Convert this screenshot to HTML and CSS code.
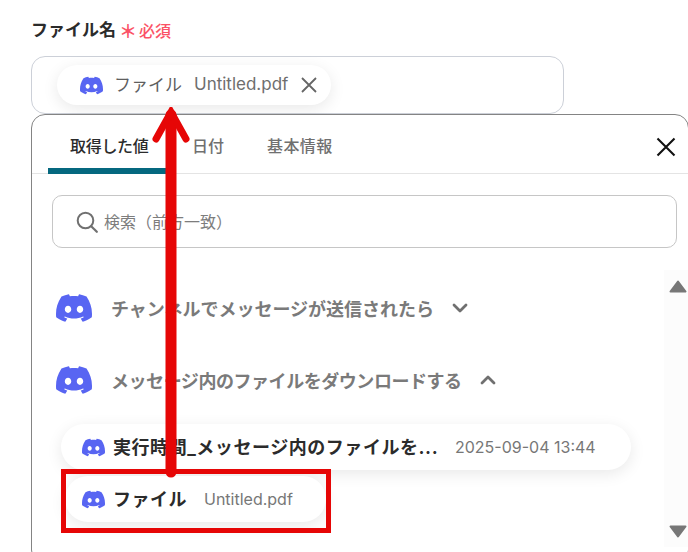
FILE: index.html
```html
<!DOCTYPE html>
<html lang="ja">
<head>
<meta charset="utf-8">
<title>ファイル名</title>
<link rel="stylesheet" href="styles.css">
</head>
<body>
<svg class="defs" width="0" height="0" aria-hidden="true">
  <symbol id="discord" viewBox="0 0 24 24"><path fill="#5865f2" d="M20.317 4.3698a19.7913 19.7913 0 00-4.8851-1.5152.0741.0741 0 00-.0785.0371c-.211.3753-.4447.8648-.6083 1.2495-1.8447-.2762-3.68-.2762-5.4868 0-.1636-.3933-.4058-.8742-.6177-1.2495a.077.077 0 00-.0785-.037 19.7363 19.7363 0 00-4.8852 1.515.0699.0699 0 00-.0321.0277C.5334 9.0458-.319 13.5799.0992 18.0578a.0824.0824 0 00.0312.0561c2.0528 1.5076 4.0413 2.4228 5.9929 3.0294a.0777.0777 0 00.0842-.0276c.4616-.6304.8731-1.2952 1.226-1.9942a.076.076 0 00-.0416-.1057c-.6528-.2476-1.2743-.5495-1.8722-.8923a.077.077 0 01-.0076-.1277c.1258-.0943.2517-.1923.3718-.2914a.0743.0743 0 01.0776-.0105c3.9278 1.7933 8.18 1.7933 12.0614 0a.0739.0739 0 01.0785.0095c.1202.099.246.1981.3728.2924a.077.077 0 01-.0066.1276 12.2986 12.2986 0 01-1.873.8914.0766.0766 0 00-.0407.1067c.3604.698.7719 1.3628 1.225 1.9932a.076.076 0 00.0842.0286c1.961-.6067 3.9495-1.5219 6.0023-3.0294a.077.077 0 00.0313-.0552c.5004-5.177-.8382-9.6739-3.5485-13.6604a.061.061 0 00-.0312-.0286zM8.02 15.3312c-1.1825 0-2.1569-1.0857-2.1569-2.419 0-1.3332.9555-2.4189 2.157-2.4189 1.2108 0 2.1757 1.0952 2.1568 2.419 0 1.3332-.9555 2.4189-2.1569 2.4189zm7.9748 0c-1.1825 0-2.1569-1.0857-2.1569-2.419 0-1.3332.9554-2.4189 2.1569-2.4189 1.2108 0 2.1757 1.0952 2.1568 2.419 0 1.3332-.946 2.4189-2.1568 2.4189Z"/></symbol>
</svg>

<main class="page">
  <div class="label-row">
    <span class="label">ファイル名</span>
    <span class="required"><span class="star">＊</span>必須</span>
  </div>

  <div class="field">
    <div class="chip chip-top">
      <svg class="icon-sm"><use href="#discord"/></svg>
      <span class="chip-name">ファイル</span>
      <span class="chip-value">Untitled.pdf</span>
      <svg class="chip-x" viewBox="0 0 16 16"><path d="M1 1l14 14M15 1L1 15" fill="none" stroke="#666" stroke-width="1.8"/></svg>
    </div>
  </div>

  <section class="panel">
    <header class="tabs">
      <div class="tab tab-active">取得した値</div>
      <div class="tab">日付</div>
      <div class="tab tab-wide">基本情報</div>
      <svg class="close" viewBox="0 0 20 20"><path d="M1.5 1.5l17 17M18.5 1.5l-17 17" fill="none" stroke="#111" stroke-width="2.1"/></svg>
    </header>

    <div class="search">
      <svg class="search-icon" viewBox="0 0 22 22"><circle cx="9.5" cy="9.5" r="7.8" fill="none" stroke="#707070" stroke-width="2"/><path d="M15.2 15.2l5.6 5.6" stroke="#707070" stroke-width="2.2" fill="none" stroke-linecap="round"/></svg>
      <span class="search-text">検索（前方一致）</span>
    </div>

    <div class="tree">
      <div class="tree-list">
        <div class="group">
          <svg class="icon-lg"><use href="#discord"/></svg>
          <span class="group-name">チャンネルでメッセージが送信されたら</span>
          <svg class="chev" viewBox="0 0 16 10"><path d="M2 2l6 6 6-6" fill="none" stroke="#707070" stroke-width="2.8" stroke-linecap="round" stroke-linejoin="round"/></svg>
        </div>
        <div class="group">
          <svg class="icon-lg"><use href="#discord"/></svg>
          <span class="group-name group-name-tight">メッセージ内のファイルをダウンロードする</span>
          <svg class="chev" viewBox="0 0 16 10"><path d="M2 8l6-6 6 6" fill="none" stroke="#707070" stroke-width="2.8" stroke-linecap="round" stroke-linejoin="round"/></svg>
        </div>
        <div class="chip chip-run">
          <svg class="icon-sm"><use href="#discord"/></svg>
          <span class="run-name">実行時間_メッセージ内のファイルを...</span>
          <span class="run-value">2025-09-04 13:44</span>
        </div>
        <div class="chip chip-file">
          <svg class="icon-sm"><use href="#discord"/></svg>
          <span class="file-name">ファイル</span>
          <span class="file-value">Untitled.pdf</span>
        </div>
      </div>
      <div class="scrollbar">
        <svg class="tri" viewBox="0 0 18 13"><path d="M9 1.5L16.5 11.5H1.5Z" fill="#777" stroke="#777" stroke-width="2" stroke-linejoin="round"/></svg>
        <svg class="tri" viewBox="0 0 18 13"><path d="M1.5 1.5H16.5L9 11.5Z" fill="#777" stroke="#777" stroke-width="2" stroke-linejoin="round"/></svg>
      </div>
    </div>
  </section>
</main>

<div class="highlight"></div>
<svg class="arrow" viewBox="0 0 40 380"><path d="M20 8V365" fill="none" stroke="#e60606" stroke-width="11" stroke-linecap="round"/><path d="M5 32L20 5l15 27" fill="none" stroke="#e60606" stroke-width="7" stroke-linecap="round" stroke-linejoin="miter"/></svg>
</body>
</html>
```
FILE: styles.css
```css
* { box-sizing: border-box; }
html, body { margin: 0; height: 100%; }
body {
  width: 688px;
  height: 552px;
  overflow: hidden;
  position: relative;
  background: #fff;
  color: #2b2b2b;
  font-family: Inter, "Noto Sans CJK JP", sans-serif;
}
.defs { position: absolute; }
.page { padding: 19px 0 0 31px; width: 689px; }

.label-row { display: flex; align-items: center; height: 24px; padding-bottom: 2px; }
.label { font-size: 17px; font-weight: 700; line-height: 22px; color: #2b2b2b; }
.required { display: flex; align-items: center; margin-left: 3px; font-size: 16px; font-weight: 500; color: #fb5266; }
.star { font-size: 18px; width: 18px; margin-right: 2px; font-weight: 700; }

.field {
  margin-top: 13px;
  width: 533px;
  height: 58px;
  border: 1px solid #ccd0d8;
  border-radius: 14px;
  padding: 8px 0 0 25px;
}
.chip {
  display: flex;
  align-items: center;
  background: #fff;
  border-radius: 23px;
  box-shadow: 0 4px 16px rgba(0, 0, 0, 0.09);
}
.chip-top { width: 274px; height: 40px; padding-left: 23px; }
.icon-sm { width: 23px; height: 23px; flex: none; }
.chip-name { margin-left: 11px; padding-bottom: 3px; font-size: 17px; color: #5e5e5e; }
.chip-value { margin-left: 12px; padding-bottom: 3px; font-size: 17px; color: #6e6e6e; }
.chip-x { width: 16px; height: 16px; margin-left: 13px; }

.panel {
  width: 658px;
  height: 450px;
  border: 1px solid #848484;
  border-radius: 14px;
  background: #fff;
}
.tabs {
  display: flex;
  position: relative;
  height: 59px;
  padding-left: 16px;
  border-bottom: 1px solid #e4e4e4;
}
.tab {
  height: 59px;
  padding-top: 20px;
  font-size: 16px;
  line-height: 22px;
  font-weight: 500;
  color: #707070;
}
.tab-active {
  width: 118px;
  padding-left: 22px;
  letter-spacing: -0.3px;
  color: #2b2b2b;
  border-bottom: 6px solid #05687f;
  border-radius: 6px 6px 0 0;
}
.tab-active + .tab { width: 84px; padding-left: 26px; }
.tab-wide { margin-left: 17px; letter-spacing: 0.4px; }
.close { position: absolute; right: 12px; top: 22px; width: 20px; height: 20px; }

.search {
  display: flex;
  align-items: center;
  height: 53px;
  margin: 21px 11px 0 20px;
  padding-left: 23px;
  border: 1px solid #c6c6c6;
  border-radius: 10px;
}
.search-icon { width: 22px; height: 22px; flex: none; }
.search-text { margin-left: 6px; padding-bottom: 2px; font-size: 16px; color: #7d7d7d; }

.tree { display: flex; margin-top: 22px; }
.tree-list { flex: 1; min-width: 0; padding: 2px 0 0 24px; }
.group { display: flex; align-items: center; height: 72px; }
.icon-lg { width: 36px; height: 36px; flex: none; }
.group-name { margin-left: 19px; padding-bottom: 1px; font-size: 18px; font-weight: 700; color: #7a7a7a; }
.group-name-tight { letter-spacing: -0.45px; }
.chev { width: 16px; height: 10px; margin-left: 18px; }

.chip-run { width: 570px; height: 46px; margin: 8px 0 0 5px; padding-left: 21px; }
.run-name {
  flex: none;
  width: 326px;
  margin-left: 8px;
  padding-bottom: 3px;
  font-size: 18px;
  font-weight: 700;
  letter-spacing: 0.55px;
  white-space: nowrap;
}
.run-value { margin-left: 16px; padding-bottom: 1px; font-size: 16px; color: #777; white-space: nowrap; }
.chip-file { width: 261px; height: 46px; margin: 6px 0 0 9px; padding-left: 17px; }
.file-name { margin-left: 8px; padding-bottom: 3px; font-size: 18px; font-weight: 700; letter-spacing: 0.5px; }
.file-value { margin-left: 17px; padding-bottom: 1px; font-size: 16px; color: #777; }

.scrollbar {
  flex: none;
  display: flex;
  flex-direction: column;
  justify-content: space-between;
  align-items: center;
  width: 24px;
  height: 277px;
  padding: 10px 0 9px 4px;
  background: #fcfcfc;
}
.tri { width: 18px; height: 13px; flex: none; }

.highlight {
  position: absolute;
  left: 61px;
  top: 469px;
  width: 270px;
  height: 64px;
  border: 5px solid #e60606;
}
.arrow {
  position: absolute;
  left: 151px;
  top: 107px;
  width: 40px;
  height: 380px;
}
```
